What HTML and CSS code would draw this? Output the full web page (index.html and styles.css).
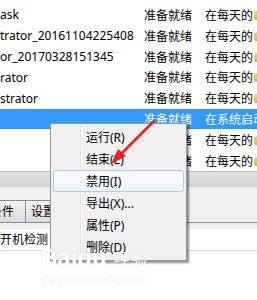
FILE: index.html
```html
<!DOCTYPE html>
<html lang="zh-CN">
<head>
    <meta charset="UTF-8">
    <title>任务计划程序</title>
    <link rel="stylesheet" href="styles.css">
</head>
<body>

<div class="window">
    <!-- task list -->
    <div class="task-list">
        <div class="row"><span class="name">ask</span><span class="status">准备就绪</span><span class="trigger">在每天的</span><span class="more"></span></div>
        <div class="row"><span class="name">trator_20161104225408</span><span class="status">准备就绪</span><span class="trigger">在每天的</span><span class="more"></span></div>
        <div class="row"><span class="name">or_20170328151345</span><span class="status">准备就绪</span><span class="trigger">在每天的</span><span class="more"></span></div>
        <div class="row"><span class="name">rator</span><span class="status">准备就绪</span><span class="trigger">在每天的</span><span class="more"></span></div>
        <div class="row"><span class="name">strator</span><span class="status">准备就绪</span><span class="trigger">在每天的</span><span class="more"></span></div>
        <div class="row selected"><span class="name"></span><span class="status">准备就绪</span><span class="trigger">在系统启动</span></div>
        <div class="row"><span class="name"></span><span class="status">准备就绪</span><span class="trigger">在每天的</span><span class="more"></span></div>
        <div class="row"><span class="name"></span><span class="status">准备就绪</span><span class="trigger">在每天的</span><span class="more"></span></div>
    </div>

    <div class="hscroll"></div>

    <!-- details pane -->
    <div class="details">
        <div class="tab-strip">
            <div class="tab tab-first">条件</div>
            <div class="tab">设置</div>
            <div class="tab">历史记录</div>
        </div>
        <div class="panel">
            <div class="field">开机检测</div>
        </div>
    </div>

    <!-- context menu -->
    <div class="menu">
        <div class="menu-item">运行(R)</div>
        <div class="menu-item">结束(E)</div>
        <div class="menu-item active">禁用(I)</div>
        <div class="menu-item">导出(X)...</div>
        <div class="menu-item">属性(P)</div>
        <div class="menu-item">删除(D)</div>
    </div>

    <svg class="arrow" width="257" height="300" viewBox="0 0 257 300">
        <line x1="154" y1="121" x2="121" y2="154" stroke="#e8231f" stroke-width="2.6" stroke-linecap="round"/>
        <polygon points="111,164 126,156 118,149" fill="#e8231f"/>
    </svg>

    <div class="watermark">
        <div class="wm-logo">Bai<span class="wm-du">du</span> <span class="wm-cn">经验</span></div>
        <div class="wm-url">jingyan.baidu.com</div>
    </div>
</div>

</body>
</html>
```

FILE: styles.css
```css
body {
    margin: 0;
    background-color: #ffffff;
    font-family: "Segoe UI", "Noto Sans", "Noto Sans CJK SC", sans-serif;
    font-size: 12px;
    color: #000000;
}
.window {
    position: relative;
    width: 257px;
    height: 300px;
    overflow: hidden;
    background-color: #ffffff;
}
.task-list {
    padding-top: 4.6px;
}
.row {
    display: grid;
    grid-template-columns: 144px 61px 49px 3px;
    height: 20.8px;
    align-items: center;
    white-space: nowrap;
}
.row span {
    overflow: hidden;
}
.row.selected {
    background-color: #3399ff;
    color: #ffffff;
}
.row.selected .trigger {
    overflow: visible;
}
.more {
    height: 9px;
    margin-top: 1px;
    background: linear-gradient(#f8d27a, #eeb04a);
    border-radius: 2px 0 0 2px;
}
.hscroll {
    height: 15px;
    border-top: 1px solid #b7b7b7;
    background: linear-gradient(#e4e4e4, #d2d2d2);
}
.details {
    background-color: #f0f0f0;
}
.tab-strip {
    display: flex;
    padding-top: 13px;
    border-bottom: 1px solid #898c95;
}
.tab {
    height: 21px;
    line-height: 21px;
    padding: 0 6px 0 5px;
    border: 1px solid #898c95;
    border-bottom: none;
    margin-left: -1px;
    background: linear-gradient(#f2f2f2, #dcdcdc);
}
.tab-first {
    margin-left: -16px;
    padding-right: 11px;
}
.panel {
    padding-top: 6px;
}
.field {
    height: 21px;
    line-height: 21px;
    background-color: #ffffff;
    border-bottom: 1px solid #c5d8ee;
}

/* context menu */
.menu {
    position: absolute;
    left: 50px;
    top: 123px;
    width: 131px;
    padding: 2px;
    border: 1px solid #979797;
    background-color: #f0f0f0;
    box-shadow: 2px 2px 2px rgba(0, 0, 0, 0.45);
    background-image: linear-gradient(90deg, transparent 29px, #e2e3e3 29px, #e2e3e3 30px, #ffffff 30px, #ffffff 31px, transparent 31px);
}
.menu-item {
    height: 22px;
    line-height: 22px;
    padding-left: 32px;
    border: 1px solid transparent;
    border-radius: 3px;
    box-sizing: border-box;
}
.menu-item.active {
    border-color: #aeccf0;
    background: linear-gradient(#fbfcfe, #eef4fc);
}
.arrow {
    position: absolute;
    left: 0;
    top: 0;
    pointer-events: none;
}
.watermark {
    position: absolute;
    left: 40px;
    top: 244px;
    color: #ffffff;
    text-shadow: 0 0 1px rgba(0, 0, 0, 0.14);
    font-family: "Liberation Sans", sans-serif;
    pointer-events: none;
}
.wm-logo {
    font-size: 24px;
    font-weight: bold;
    line-height: 28px;
}
.wm-cn {
    font-family: "Noto Sans CJK SC", sans-serif;
    font-size: 17px;
    font-weight: normal;
}
.wm-url {
    font-size: 12px;
    font-weight: bold;
    margin-left: 2px;
}
```
